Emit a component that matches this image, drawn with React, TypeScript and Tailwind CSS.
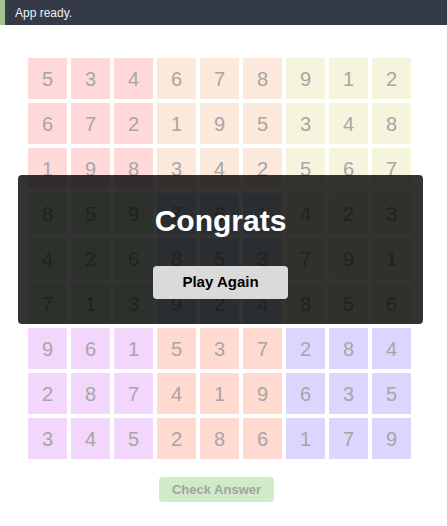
import React from "react";

const grid = [
  [5, 3, 4, 6, 7, 8, 9, 1, 2],
  [6, 7, 2, 1, 9, 5, 3, 4, 8],
  [1, 9, 8, 3, 4, 2, 5, 6, 7],
  [8, 5, 9, 7, 6, 1, 4, 2, 3],
  [4, 2, 6, 8, 5, 3, 7, 9, 1],
  [7, 1, 3, 9, 2, 4, 8, 5, 6],
  [9, 6, 1, 5, 3, 7, 2, 8, 4],
  [2, 8, 7, 4, 1, 9, 6, 3, 5],
  [3, 4, 5, 2, 8, 6, 1, 7, 9],
];

const boxColors = [
  ["bg-[#ffd9d9]", "bg-[#fde8dc]", "bg-[#f5f5de]"],
  ["bg-[#dcf2d6]", "bg-[#d6e6f2]", "bg-[#f5f0d3]"],
  ["bg-[#f3d6fc]", "bg-[#ffdad0]", "bg-[#dcd6ff]"],
];

export default function App() {
  return (
    <div
      className="relative min-h-[526px] bg-white"
      style={{ fontFamily: '"Liberation Sans", Arial, sans-serif' }}
    >
      <div className="h-[25px] bg-[#343a46] border-l-[5px] border-[#a3c38f] flex items-center pl-[10px]">
        <span className="text-[12px] text-[#eef0f4]">App ready.</span>
      </div>

      <div className="ml-[28px] mt-[33px] grid grid-cols-[repeat(9,39px)] auto-rows-[41px] gap-x-[4px] gap-y-[4px] w-max">
        {grid.map((row, r) =>
          row.map((v, c) => (
            <div
              key={`${r}-${c}`}
              className={`${boxColors[Math.floor(r / 3)][Math.floor(c / 3)]} flex items-center justify-center text-[20px] text-[#a6a6a6]`}
            >
              {v}
            </div>
          ))
        )}
      </div>

      <div className="ml-[159px] mt-[18px] w-[115px] h-[25px] rounded-[4px] bg-[#d0ebc8] flex items-center justify-center">
        <span className="text-[13px] font-bold text-[#a3a3a3]">Check Answer</span>
      </div>

      <div className="absolute left-[18px] top-[175px] w-[405px] h-[149px] rounded-[4px] bg-[rgba(0,0,0,0.8)] flex flex-col items-center">
        <div className="mt-[28px] text-[30px] leading-[36px] font-bold text-white">Congrats</div>
        <button className="mt-[27px] w-[135px] h-[33px] rounded-[4px] bg-[#dadada] text-[15px] font-bold text-black">
          Play Again
        </button>
      </div>
    </div>
  );
}
